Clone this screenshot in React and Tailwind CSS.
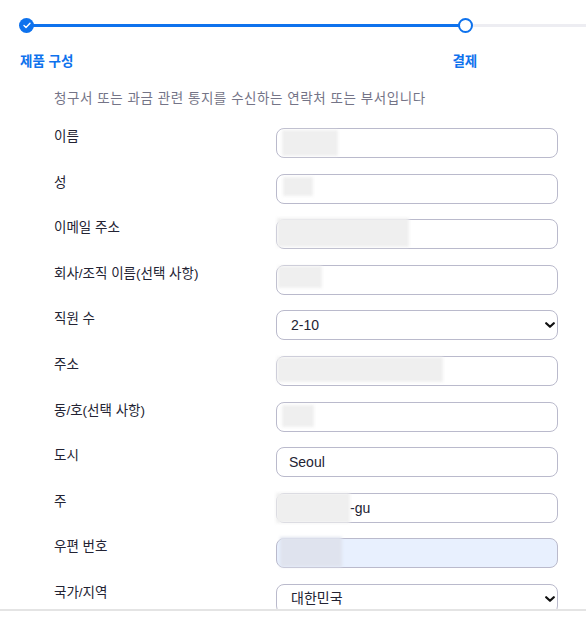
import { useState } from "react";

const FONT = { fontFamily: '"Liberation Sans", "Noto Sans CJK KR", sans-serif' };

const rows = [
  { label: "이름", blur: { left: 6, top: 2, w: 56, h: 26 } },
  { label: "성", blur: { left: 7, top: 3, w: 30, h: 19 } },
  { label: "이메일 주소", blur: { left: 1, top: -1, w: 132, h: 29 } },
  { label: "회사/조직 이름(선택 사항)", blur: { left: 2, top: 1, w: 44, h: 22 } },
  { label: "직원 수", select: "2-10" },
  { label: "주소", blur: { left: 1, top: 1, w: 166, h: 25 } },
  { label: "동/호(선택 사항)", blur: { left: 6, top: 3, w: 32, h: 22 } },
  { label: "도시", value: "Seoul" },
  { label: "주", value: "-gu", blur: { left: 0, top: 0, w: 74, h: 30 }, indent: true },
  { label: "우편 번호", autofill: true, blur: { left: 4, top: -1, w: 62, h: 30 } },
  { label: "국가/지역", select: "대한민국" },
];

function Chevron() {
  return (
    <svg width="10" height="7" viewBox="0 0 10 7" className="pointer-events-none absolute right-[3px] top-[12px]">
      <path d="M1.2 1.2 L5 4.8 L8.8 1.2" fill="none" stroke="#111" strokeWidth="2.2" strokeLinecap="round" strokeLinejoin="round" />
    </svg>
  );
}

function Field({ row }) {
  const [val, setVal] = useState(row.value || "");
  if (row.select) {
    return (
      <div className="relative w-[282px]">
        <select
          defaultValue={row.select}
          className="h-[30px] w-full appearance-none rounded-[8px] border border-[#babacc] bg-white pl-[14px] text-[14px] text-[#232333] outline-none"
        >
          <option>{row.select}</option>
        </select>
        <Chevron />
      </div>
    );
  }
  return (
    <div className="relative w-[282px]">
      <input
        value={val}
        onChange={(e) => setVal(e.target.value)}
        className={`h-[30px] w-full rounded-[8px] border border-[#babacc] text-[14px] text-[#232333] outline-none ${
          row.indent ? "pl-[73px]" : "pl-[12px]"
        } ${row.autofill ? "bg-[#e8f0fe]" : "bg-white"}`}
      />
      {row.blur && (
        <div
          className={`pointer-events-none absolute ${row.autofill ? "bg-[#dfe3ee]" : "bg-[#efefef]"} blur-[1.5px]`}
          style={{ left: row.blur.left, top: row.blur.top, width: row.blur.w, height: row.blur.h }}
        />
      )}
    </div>
  );
}

export default function App() {
  return (
    <div className="flex h-[635px] w-[586px] flex-col overflow-hidden bg-white" style={FONT}>
      <div className="flex-1 overflow-hidden">
        {/* progress */}
        <div className="relative h-[52px]">
          <div className="absolute left-[26px] top-[24px] h-[3px] w-[440px] bg-[#0e72ed]" />
          <div className="absolute left-[472px] top-[24px] h-[3px] w-[114px] bg-[#ededf2]" />
          <div className="absolute left-[19px] top-[18px] flex h-[15px] w-[15px] items-center justify-center rounded-full bg-[#0e72ed]">
            <svg width="8" height="7" viewBox="0 0 8 7">
              <path d="M1 3.6 L3 5.5 L7 1.3" fill="none" stroke="#fff" strokeWidth="1.4" strokeLinecap="round" strokeLinejoin="round" />
            </svg>
          </div>
          <div className="absolute left-[458px] top-[18px] h-[15px] w-[15px] rounded-full border-2 border-[#0e72ed] bg-white" />
        </div>
        <div className="flex h-[20px] items-center text-[13.5px] font-bold text-[#0e72ed]">
          <span className="ml-[20px]">제품 구성</span>
          <span className="ml-[379px]">결제</span>
        </div>
        <p className="ml-[54px] mt-[17px] text-[13.5px] leading-[20px] tracking-[0.55px] text-[#747487]">
          청구서 또는 과금 관련 통지를 수신하는 연락처 또는 부서입니다
        </p>
        <div className="ml-[54px] mt-[19px] flex flex-col gap-[15.6px]">
          {rows.map((row) => (
            <div key={row.label} className="flex items-start">
              <label className="mt-[-1px] w-[222px] text-[13.5px] leading-[20px] text-[#232333]">{row.label}</label>
              <Field row={row} />
            </div>
          ))}
        </div>
      </div>
      <div className="h-[26px] shrink-0 border-t-2 border-[#e4e4e4] bg-white" />
    </div>
  );
}
